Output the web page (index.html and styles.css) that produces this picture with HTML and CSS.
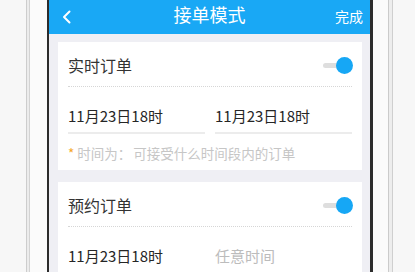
FILE: index.html
```html
<!DOCTYPE html>
<html lang="zh-CN">
<head>
<meta charset="utf-8">
<title>接单模式</title>
<link rel="stylesheet" href="styles.css">
</head>
<body>
<div class="phone">
  <div class="bezel bezel-left"></div>
  <div class="screen">
    <header class="nav">
      <span class="nav-back">
        <svg width="9" height="14" viewBox="0 0 9 14"><path d="M7.5 1.5 L2 7 L7.5 12.5" fill="none" stroke="#fff" stroke-width="2" stroke-linecap="round" stroke-linejoin="round"/></svg>
      </span>
      <span class="nav-title">接单模式</span>
      <span class="nav-done">完成</span>
    </header>
    <main class="content">
      <section class="card">
        <div class="card-head">
          <span class="card-title">实时订单</span>
          <span class="toggle"><span class="toggle-track"></span><span class="toggle-knob"></span></span>
        </div>
        <div class="date-row">
          <span class="date-field">11月23日18时</span>
          <span class="date-field">11月23日18时</span>
        </div>
        <p class="hint"><span class="star">*</span>时间为：<span class="hint-rest">可接受什么时间段内的订单</span></p>
      </section>
      <section class="card">
        <div class="card-head">
          <span class="card-title">预约订单</span>
          <span class="toggle"><span class="toggle-track"></span><span class="toggle-knob"></span></span>
        </div>
        <div class="date-row">
          <span class="date-field">11月23日18时</span>
          <span class="date-field placeholder">任意时间</span>
        </div>
      </section>
    </main>
  </div>
  <div class="bezel bezel-right"></div>
</div>
</body>
</html>
```
FILE: styles.css
```css
* { box-sizing: border-box; }
html, body {
  margin: 0;
  padding: 0;
}
body {
  width: 415px;
  height: 272px;
  overflow: hidden;
  background: #f8f8f8;
  font-family: "Noto Sans CJK SC", "Noto Sans", sans-serif;
}
.phone {
  display: flex;
  height: 272px;
}
.bezel-left {
  width: 47px;
  flex: none;
  background: linear-gradient(to right,
    #f7f7f7 0, #f7f7f7 26px,
    #cdcdcd 26px, #cdcdcd 27px,
    #ececec 27px, #ececec 29px,
    #d3d3d3 29px, #d3d3d3 30px,
    #fbfbfb 30px, #fbfbfb 47px);
}
.bezel-right {
  flex: 1;
  background: linear-gradient(to right,
    #fbfbfb 0, #fbfbfb 15px,
    #cbcbcb 15px, #cbcbcb 16px,
    #ededed 16px, #ededed 19px,
    #cfcfcf 19px, #cfcfcf 20px,
    #f7f7f7 20px);
}
.screen {
  width: 326px;
  flex: none;
  border-left: 2px solid #2c2c2c;
  border-right: 3px solid #2c2c2c;
  background: #efeff4;
  display: flex;
  flex-direction: column;
  overflow: hidden;
}
.nav {
  flex: none;
  height: 34px;
  background: #19a8f5;
  display: flex;
  align-items: center;
  justify-content: space-between;
  padding: 0 7px 5px 13px;
  color: #fff;
  position: relative;
}
.nav-back {
  display: flex;
  width: 9px;
  margin-top: 5px;
}
.nav-title {
  font-size: 18px;
  line-height: 20px;
  position: absolute;
  left: 0;
  right: 0;
  top: 4px;
  text-align: center;
}
.nav-done {
  font-size: 14px;
  line-height: 16px;
  margin-top: 3px;
}
.content {
  flex: none;
  padding: 8px 8px 0 9px;
  display: flex;
  flex-direction: column;
  gap: 12px;
}
.card {
  flex: none;
  background: #fff;
  padding: 0 10px;
}
.card-head {
  height: 45px;
  display: flex;
  align-items: center;
  justify-content: space-between;
  border-bottom: 1px dotted #d6d6d6;
  padding-top: 1px;
}
.card-title {
  font-size: 16px;
  color: #333;
}
.toggle {
  position: relative;
  width: 30px;
  height: 17px;
  margin-right: -1px;
  margin-top: 1px;
}
.toggle-track {
  position: absolute;
  left: 0;
  right: 4px;
  top: 6px;
  height: 5px;
  border-radius: 3px;
  background: #dedede;
}
.toggle-knob {
  position: absolute;
  right: 0;
  top: 0;
  width: 17px;
  height: 17px;
  border-radius: 50%;
  background: #16a7f5;
}
.date-row {
  display: flex;
  gap: 10px;
  padding-top: 19px;
}
.date-field {
  flex: 1;
  font-size: 15px;
  line-height: 20px;
  color: #262626;
  padding-bottom: 6px;
  border-bottom: 2px solid #ececec;
}
.placeholder {
  color: #bcbcbc;
}
.hint {
  margin: 0;
  padding: 10px 0 8px;
  font-size: 13.5px;
  line-height: 18px;
  color: #c6c6c6;
}
.hint-rest {
  margin-left: 2px;
}
.star {
  color: #f5a623;
  margin-right: 3px;
}
```
